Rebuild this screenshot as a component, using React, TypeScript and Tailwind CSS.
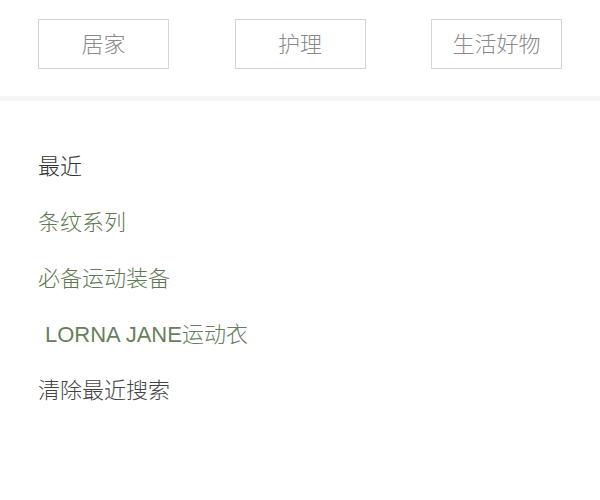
import React from "react";

export default function App() {
  const font = { fontFamily: '"Liberation Sans", "Noto Sans CJK SC", sans-serif' };
  const tabs = ["居家", "护理", "生活好物"];
  return (
    <div className="w-[600px] h-[500px] bg-white overflow-hidden" style={font}>
      <div className="h-[96px] px-[38px] pt-[19px] flex justify-between items-start">
        {tabs.map((t) => (
          <div
            key={t}
            className="w-[131px] h-[50px] border border-[#d4d4d4] flex items-center justify-center text-[22px] text-[#8a8a8a] font-light"
          >
            {t}
          </div>
        ))}
      </div>
      <div className="h-[5px] bg-[#f6f6f6]" />
      <div className="pt-[38px] px-[38px] text-[22px] font-light">
        <div className="h-[56px] leading-[56px] text-[#333333]">最近</div>
        <div className="h-[56px] leading-[56px] text-[#5d7a52]">条纹系列</div>
        <div className="h-[56px] leading-[56px] text-[#5d7a52]">必备运动装备</div>
        <div className="h-[56px] leading-[56px] text-[#66805c] pl-[7px]">LORNA JANE运动衣</div>
        <div className="h-[56px] leading-[56px] text-[#444444]">清除最近搜索</div>
      </div>
    </div>
  );
}
